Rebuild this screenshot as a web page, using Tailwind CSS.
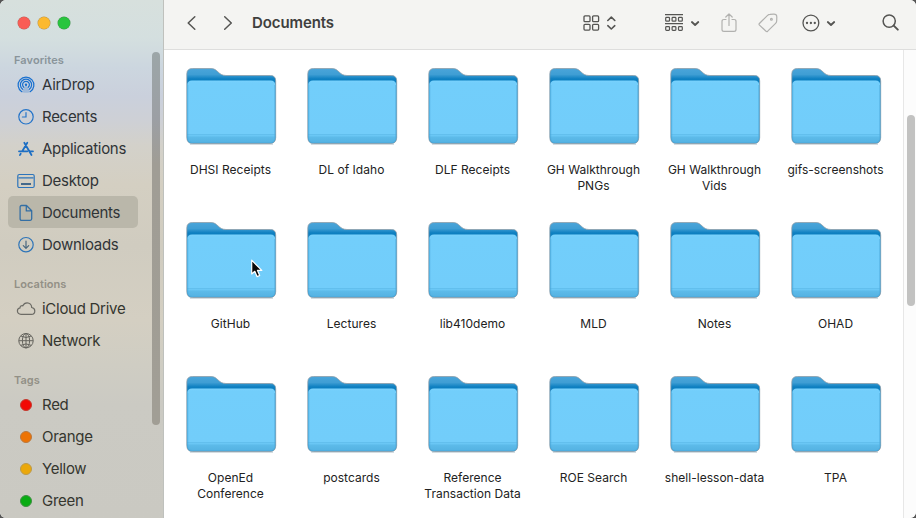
<!DOCTYPE html>
<html lang="en">
<head>
<meta charset="utf-8">
<title>Documents</title>
<script src="https://cdn.jsdelivr.net/npm/@tailwindcss/browser@4"></script>
</head>
<body class="bg-[#555]">
<svg class="absolute h-0 w-0">
  <defs>
    <linearGradient id="back" x1="0" y1="0" x2="0" y2="1"><stop offset="0" stop-color="#4aa5da"/><stop offset=".08" stop-color="#3f9ed4"/><stop offset=".14" stop-color="#0d7fc0"/><stop offset="1" stop-color="#1683c0"/></linearGradient>
    <linearGradient id="front" x1="0" y1="0" x2="0" y2="1"><stop offset="0" stop-color="#7ad2fc"/><stop offset=".04" stop-color="#72cefb"/><stop offset=".85" stop-color="#72cdfa"/><stop offset=".86" stop-color="#60bdec"/><stop offset=".88" stop-color="#6ac7f5"/><stop offset=".91" stop-color="#5cbae9"/><stop offset="1" stop-color="#54b2e2"/></linearGradient>
    <symbol id="folder" viewBox="0 0 93 80">
      <path d="M2.800 8Q2.800 2.500 8.500 2.500H27C34 2.500 34 9.500 42 9.500H86.500Q91.700 9.500 91.700 15V71.500Q91.700 77.500 86 77.500H8.500Q2.800 77.500 2.800 71.500Z" fill="url(#back)" stroke="#8c9ba5" stroke-opacity=".75" stroke-width="1"/>
      <path d="M3.300 19Q3.300 14.500 8 14.500H86.500Q91.200 14.500 91.200 19V72Q91.200 77 86 77H8.500Q3.300 77 3.300 72Z" fill="url(#front)"/>
      <path d="M3.800 19V72Q3.800 76.500 8.500 76.500H86Q90.700 76.500 90.700 72V19" fill="none" stroke="#4fabdc" stroke-opacity=".65"/>
      <path d="M6 78.500H89" stroke="#889aa5" stroke-opacity=".35"/>
    </symbol>
  </defs>
</svg>
<div class="relative flex h-[518px] w-[916px] overflow-hidden rounded-[6px] bg-white font-['Inter',sans-serif]">
  <aside class="relative flex w-[164px] shrink-0 flex-col border-r border-[#bfc1bd] bg-[linear-gradient(180deg,#d7e0dd_0px,#d4dfdf_38px,#ccd6df_68px,#cad0dc_96px,#ced0d5_122px,#d3d1ca_145px,#d4cfc2_185px,#d0ccc0_245px,#d4cfc2_320px,#cfcdc3_365px,#cbcac3_405px,#cac9c2_518px)] pl-2 text-[15px] tracking-[-0.28px] text-[#35362f]">
    <div class="flex h-9 shrink-0 items-center gap-2 pt-[10px] pl-[10px]">
      <span class="size-3 rounded-full bg-[#f95d55] shadow-[0_0_0_0.5px_#b9635e]"></span>
      <span class="size-3 rounded-full bg-[#fcb92e] shadow-[0_0_0_0.5px_#bb9550]"></span>
      <span class="size-3 rounded-full bg-[#29c53e] shadow-[0_0_0_0.5px_#429450]"></span>
    </div>
    <h2 class="flex h-8 shrink-0 items-end pb-[1px] pl-[6px] text-[11px] leading-[14px] font-semibold tracking-[0.1px] text-[#89949a]">Favorites</h2>
    <nav class="flex w-[130px] flex-col text-[#303437]">
      <a class="flex h-8 items-center gap-[7px] pt-[2px] pl-[9px]"><svg class="size-[18px] text-[#1870cf]" viewBox="0 0 18 18" fill="none" stroke="currentColor" stroke-width="1.200" stroke-linecap="round"><path d="M4.800 15.700A7.900 7.900 0 1 1 13.200 15.700M5.700 13.300A5.600 5.600 0 1 1 12.300 13.300M6.800 11.300A3.400 3.400 0 1 1 11.200 11.300"/><path d="M9 8.700L13.200 15.900Q9 17.700 4.800 15.900Z" fill="currentColor" fill-opacity=".25" stroke="none"/><circle cx="9" cy="8.800" r="1.200" fill="currentColor" stroke="none"/></svg>AirDrop</a>
      <a class="flex h-8 items-center gap-[7px] pt-[2px] pl-[9px]"><svg class="size-[18px] text-[#2675c9]" viewBox="0 0 18 18" fill="none" stroke="currentColor" stroke-width="1.200" stroke-linecap="round"><circle cx="9" cy="8.800" r="7.200"/><path d="M9 4.500V9H5.400"/></svg>Recents</a>
      <a class="flex h-8 items-center gap-[7px] pt-[2px] pl-[9px]"><svg class="size-[18px] text-[#1d6fc4]" viewBox="0 0 18 18" fill="none" stroke="currentColor" stroke-width="1.800" stroke-linecap="round"><path d="M7.300 2.800L14.500 15M10.300 2.800L5.200 11.200M3.700 13.800L2.900 15.100M2 11.300H10.300M13 11.300H16"/></svg>Applications</a>
      <a class="flex h-8 items-center gap-[7px] pt-[2px] pl-[9px]"><svg class="size-[18px] text-[#2c74bb]" viewBox="0 0 18 18" fill="none" stroke="currentColor" stroke-width="1.200"><rect x=".8" y="2.500" width="16.400" height="13" rx="1.500"/><path d="M1.500 5.800H16.500"/><path d="M4 12H14" stroke="#44698b" stroke-width="2.200"/></svg>Desktop</a>
      <a class="flex h-8 items-center gap-[7px] rounded-[5px] bg-[#bab7aa] pt-[2px] pl-[9px]"><svg class="size-[18px] text-[#346fa4]" viewBox="0 0 18 18" fill="none" stroke="currentColor" stroke-width="1.300" stroke-linejoin="round"><path d="M4.600 1.500H9.500L14.700 6.700V14.800Q14.700 16.300 13.200 16.300H4.600Q3.100 16.300 3.100 14.800V3Q3.100 1.500 4.600 1.500ZM9.300 1.800V6.900H14.400"/></svg>Documents</a>
      <a class="flex h-8 items-center gap-[7px] pt-[2px] pl-[9px]"><svg class="size-[18px] text-[#2f75b8]" viewBox="0 0 18 18" fill="none" stroke="currentColor" stroke-width="1.200" stroke-linecap="round" stroke-linejoin="round"><circle cx="9" cy="8.700" r="7.200"/><path d="M9 5V12.200M6.300 9.700L9 12.400L11.700 9.700" stroke="#49677f"/></svg>Downloads</a>
    </nav>
    <h2 class="flex h-8 shrink-0 items-end pb-[1px] pl-[6px] text-[11px] leading-[14px] font-semibold tracking-[0.05px] text-[#929086]">Locations</h2>
    <nav class="flex w-[130px] flex-col">
      <a class="flex h-8 items-center gap-[7px] pt-[2px] pl-[9px]"><svg class="size-[18px] overflow-visible text-[#6c6b65]" viewBox="0 0 18 18" fill="none" stroke="currentColor" stroke-width="1.200"><path d="M4 14.300C1.900 14.300.4 12.900.4 11.100C.4 9.500 1.500 8.200 3 7.900C3 6.300 4.300 5.400 5.800 5.800C6.600 3.900 8.200 2.800 10.100 2.800C12.800 2.800 14.700 4.800 14.700 7.500C16.500 7.800 17.800 9.100 17.800 10.900C17.800 12.800 16.300 14.300 14.400 14.300Z"/></svg>iCloud Drive</a>
      <a class="flex h-8 items-center gap-[7px] pt-[2px] pl-[9px]"><svg class="size-[18px] text-[#65645e]" viewBox="0 0 18 18" fill="none" stroke="currentColor" stroke-width="1"><circle cx="9" cy="8.700" r="7.200"/><ellipse cx="9" cy="8.700" rx="3.600" ry="7.200"/><path d="M9 1.500V15.900M1.800 8.700H16.200M3.700 4Q9 7 14.300 4M3.700 13.400Q9 10.400 14.300 13.400"/></svg>Network</a>
    </nav>
    <h2 class="flex h-8 shrink-0 items-end pb-[1px] pl-[6px] text-[11px] leading-[14px] font-semibold tracking-[0.05px] text-[#929086]">Tags</h2>
    <nav class="flex w-[130px] flex-col">
      <a class="flex h-8 shrink-0 items-center gap-[10px] pt-[2px] pl-3"><span class="size-3 rounded-full border-[0.5px] border-[#c33b30] bg-[#f20a05]"></span><span class="h-[22px]">Red</span></a>
      <a class="flex h-8 shrink-0 items-center gap-[10px] pt-[2px] pl-3"><span class="size-3 rounded-full border-[0.5px] border-[#b9783f] bg-[#ed7304]"></span><span class="h-[22px]">Orange</span></a>
      <a class="flex h-8 shrink-0 items-center gap-[10px] pt-[2px] pl-3"><span class="size-3 rounded-full border-[0.5px] border-[#bb9a4c] bg-[#eba80a]"></span><span class="h-[22px]">Yellow</span></a>
      <a class="flex h-8 shrink-0 items-center gap-[10px] pt-[2px] pl-3"><span class="size-3 rounded-full border-[0.5px] border-[#3f8f43] bg-[#09ac13]"></span><span class="h-[22px]">Green</span></a>
    </nav>
    <div class="absolute top-[52px] left-[152px] h-[373px] w-2 rounded-full bg-[linear-gradient(180deg,#9ca6a8,#9c9fa4_18%,#a09d95_30%,#a19e95)]"></div>
  </aside>
  <main class="flex min-w-0 flex-1 flex-col">
    <header class="flex h-[50px] shrink-0 items-center border-b border-[#dededd] bg-[#f4f4f2] pb-1 text-[#555553]">
      <svg class="ml-[21px] h-[18px] w-3" viewBox="0 0 12 18" fill="none" stroke="currentColor" stroke-width="1.500" stroke-linecap="round" stroke-linejoin="round"><path d="M9.800 2.700L3.200 9L9.800 15.300"/></svg>
      <svg class="ml-6 h-[18px] w-3" viewBox="0 0 12 18" fill="none" stroke="currentColor" stroke-width="1.500" stroke-linecap="round" stroke-linejoin="round"><path d="M3.700 2.700L10.300 9L3.700 15.300"/></svg>
      <h1 class="ml-[19px] w-[331px] text-[15px] leading-5 font-semibold tracking-[-0.1px] text-[#3f3f3e]">Documents</h1>
      <svg class="h-[18px] w-[34px]" viewBox="0 0 34 18" fill="none" stroke="currentColor" stroke-width="1.300"><rect x="1" y="1.900" width="6" height="5.800" rx="1"/><rect x="9.600" y="1.900" width="6" height="5.800" rx="1"/><rect x="1" y="10.300" width="6" height="5.800" rx="1"/><rect x="9.600" y="10.300" width="6" height="5.800" rx="1"/><path d="M24.800 6.500L28.300 3.200L31.800 6.500M24.800 11.700L28.300 15L31.800 11.700" stroke-width="1.600" stroke-linecap="round" stroke-linejoin="round"/></svg>
      <svg class="ml-[47px] h-5 w-9" viewBox="0 0 36 20" fill="none" stroke="currentColor" stroke-width="1.200"><path d="M1 1.700H19M1 10.700H19"/><rect x="1.700" y="4.400" width="3.800" height="3.800" rx=".8"/><rect x="8.100" y="4.400" width="3.800" height="3.800" rx=".8"/><rect x="14.500" y="4.400" width="3.800" height="3.800" rx=".8"/><rect x="1.700" y="13.600" width="3.800" height="3.800" rx=".8"/><rect x="8.100" y="13.600" width="3.800" height="3.800" rx=".8"/><rect x="14.500" y="13.600" width="3.800" height="3.800" rx=".8"/><path d="M27.900 9L31.100 12L34.300 9" stroke-width="1.800" stroke-linecap="round" stroke-linejoin="round"/></svg>
      <svg class="ml-5 h-5 w-[18px] text-[#b1b1af]" viewBox="0 0 18 20" fill="none" stroke="currentColor" stroke-width="1.200" stroke-linecap="round" stroke-linejoin="round"><path d="M6 6.500H4Q2 6.500 2 8.500V16.500Q2 18.400 4 18.400H14Q16 18.400 16 16.500V8.500Q16 6.500 14 6.500H12M9 12.500V1M5.800 4L9 .8L12.200 4"/></svg>
      <svg class="ml-5 h-5 w-5 text-[#b1b1af]" viewBox="0 0 20 20" fill="none" stroke="currentColor" stroke-width="1.200" stroke-linejoin="round"><path d="M1.400 10.500L9.600 2.300Q10.600 1.300 12 1.300L15.800 1.100Q18.800 1 18.800 4L18.700 7.700Q18.700 9.200 17.600 10.300L9.700 18.200Q8.800 19 8 18.200L1.500 12.100Q.7 11.300 1.400 10.500Z"/><circle cx="13.400" cy="6.300" r=".9"/></svg>
      <svg class="ml-[23px] h-5 w-9" viewBox="0 0 36 20" fill="none" stroke="currentColor" stroke-width="1.300"><circle cx="9.900" cy="10" r="7.900"/><g fill="currentColor" stroke="none"><circle cx="6" cy="10" r="1.150"/><circle cx="9.900" cy="10" r="1.150"/><circle cx="13.800" cy="10" r="1.150"/></g><path d="M26.800 9L30 12L33.200 9" stroke-width="1.800" stroke-linecap="round" stroke-linejoin="round"/></svg>
      <svg class="ml-[44px] size-5" viewBox="0 0 20 20" fill="none" stroke="currentColor" stroke-width="1.500" stroke-linecap="round"><circle cx="8.200" cy="8.100" r="6.100"/><path d="M12.700 12.600L16.800 16.600" stroke-width="2"/></svg>
    </header>
    <div class="flex min-h-0 flex-1">
      <section id="files" class="grid w-[739px] shrink-0 auto-rows-[154px] grid-cols-[repeat(6,121px)] content-start pt-4 pl-[6px]"></section>
      <div class="flex w-[13px] flex-col border-l border-[#e7e7e7] bg-[#fcfcfc] pt-[65px] pl-[3px]"><div class="h-[191px] w-2 rounded-full bg-[#c2c2c1]"></div></div>
    </div>
  </main>
  <svg class="absolute top-[259px] left-[250px] h-[20px] w-[14px]" viewBox="0 0 14 20"><path d="M1.700 1.200V15L4.800 12.300L7 17.600L9.700 16.500L7.500 11.400H11.800Z" fill="#080808" stroke="#fff" stroke-width="1.200" stroke-linejoin="round"/></svg>
</div>
<script>
  const names = [
    ['DHSI Receipts'], ['DL of Idaho'], ['DLF Receipts'], ['GH Walkthrough', 'PNGs'], ['GH Walkthrough', 'Vids'], ['gifs-screenshots'],
    ['GitHub'], ['Lectures'], ['lib410demo'], ['MLD'], ['Notes'], ['OHAD'],
    ['OpenEd', 'Conference'], ['postcards'], ['Reference', 'Transaction Data'], ['ROE Search'], ['shell-lesson-data'], ['TPA']
  ];
  document.getElementById('files').innerHTML = names.map(lines =>
    `<figure class="flex flex-col items-center"><svg class="h-[80px] w-[93px]"><use href="#folder"/></svg><figcaption class="mt-4 text-center text-[12px] leading-4 tracking-[0.03px] whitespace-nowrap text-[#222]">${lines.join('<br>')}</figcaption></figure>`
  ).join('');
</script>
</body>
</html>
